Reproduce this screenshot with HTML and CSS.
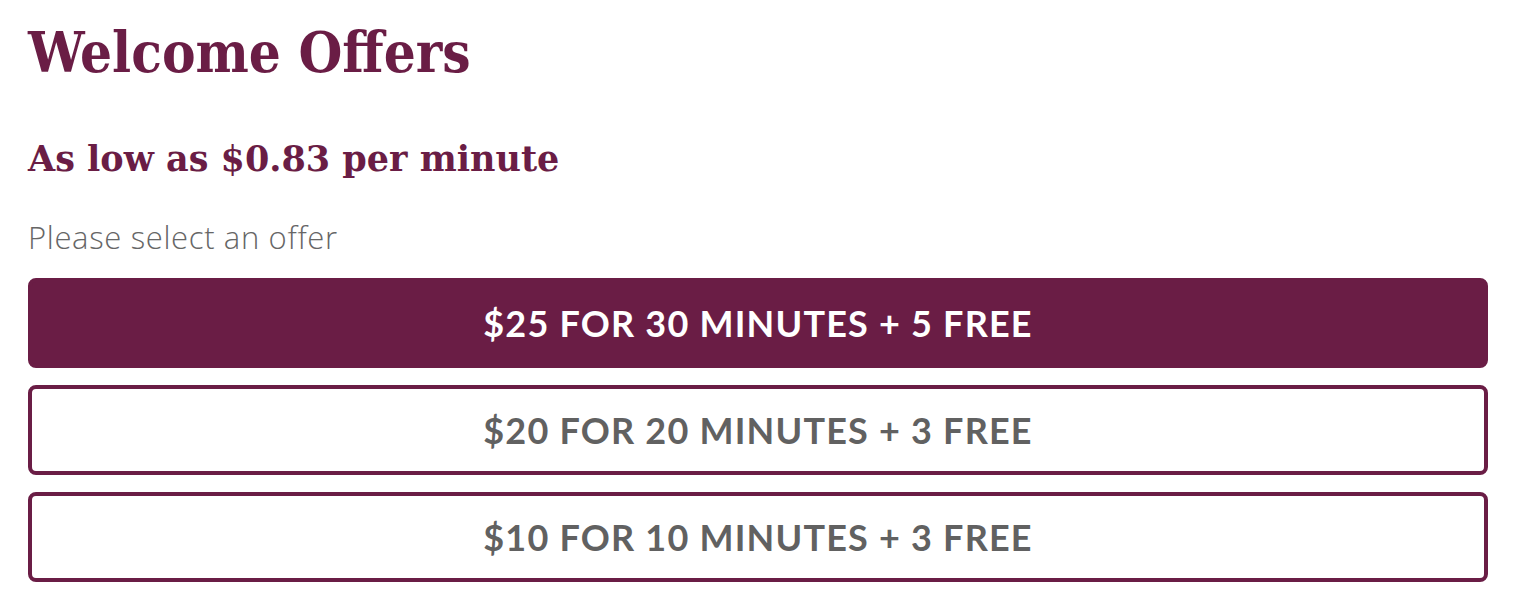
FILE: index.html
```html
<!DOCTYPE html>
<html lang="en">
<head>
<meta charset="utf-8">
<title>Welcome Offers</title>
<link rel="stylesheet" href="styles.css">
</head>
<body>
<main class="offers">
  <h1 class="offers__title">Welcome Offers</h1>
  <h2 class="offers__subtitle">As low as $0.83 per minute</h2>
  <p class="offers__hint">Please select an offer</p>
  <div class="offers__list">
    <button class="offer offer--selected" type="button">$25 FOR 30 MINUTES + 5 FREE</button>
    <button class="offer" type="button">$20 FOR 20 MINUTES + 3 FREE</button>
    <button class="offer" type="button">$10 FOR 10 MINUTES + 3 FREE</button>
  </div>
</main>
</body>
</html>
```

FILE: styles.css
```css
html, body {
  margin: 0;
  padding: 0;
  background: #ffffff;
}

.offers {
  width: 1460px;
  margin-left: 28px;
  padding-top: 24px;
}

.offers__title {
  margin: 0;
  font-family: "DejaVu Serif Condensed", "DejaVu Serif", "Liberation Serif", serif;
  font-stretch: condensed;
  font-weight: 700;
  font-size: 56px;
  line-height: 56px;
  color: #6a1d45;
}

.offers__subtitle {
  margin: 61px 0 0;
  font-family: "DejaVu Serif", "Liberation Serif", serif;
  font-weight: 700;
  font-size: 35px;
  line-height: 35px;
  color: #6a1d45;
}

.offers__hint {
  margin: 46px 0 0;
  font-family: "Open Sans", "Lato", sans-serif;
  font-weight: 300;
  font-size: 31px;
  line-height: 30px;
  letter-spacing: 0.65px;
  color: #666666;
}

.offers__list {
  display: flex;
  flex-direction: column;
  gap: 17px;
  margin-top: 26px;
}

.offer {
  display: flex;
  align-items: center;
  justify-content: center;
  box-sizing: border-box;
  width: 100%;
  height: 90px;
  padding: 0;
  border: 4px solid #6a1d45;
  border-radius: 8px;
  background: #ffffff;
  font-family: "Lato", "Open Sans", sans-serif;
  font-weight: 700;
  font-size: 36px;
  letter-spacing: 1.2px;
  color: #616161;
  cursor: pointer;
}

.offer--selected {
  background: #6a1d45;
  color: #ffffff;
}
```
